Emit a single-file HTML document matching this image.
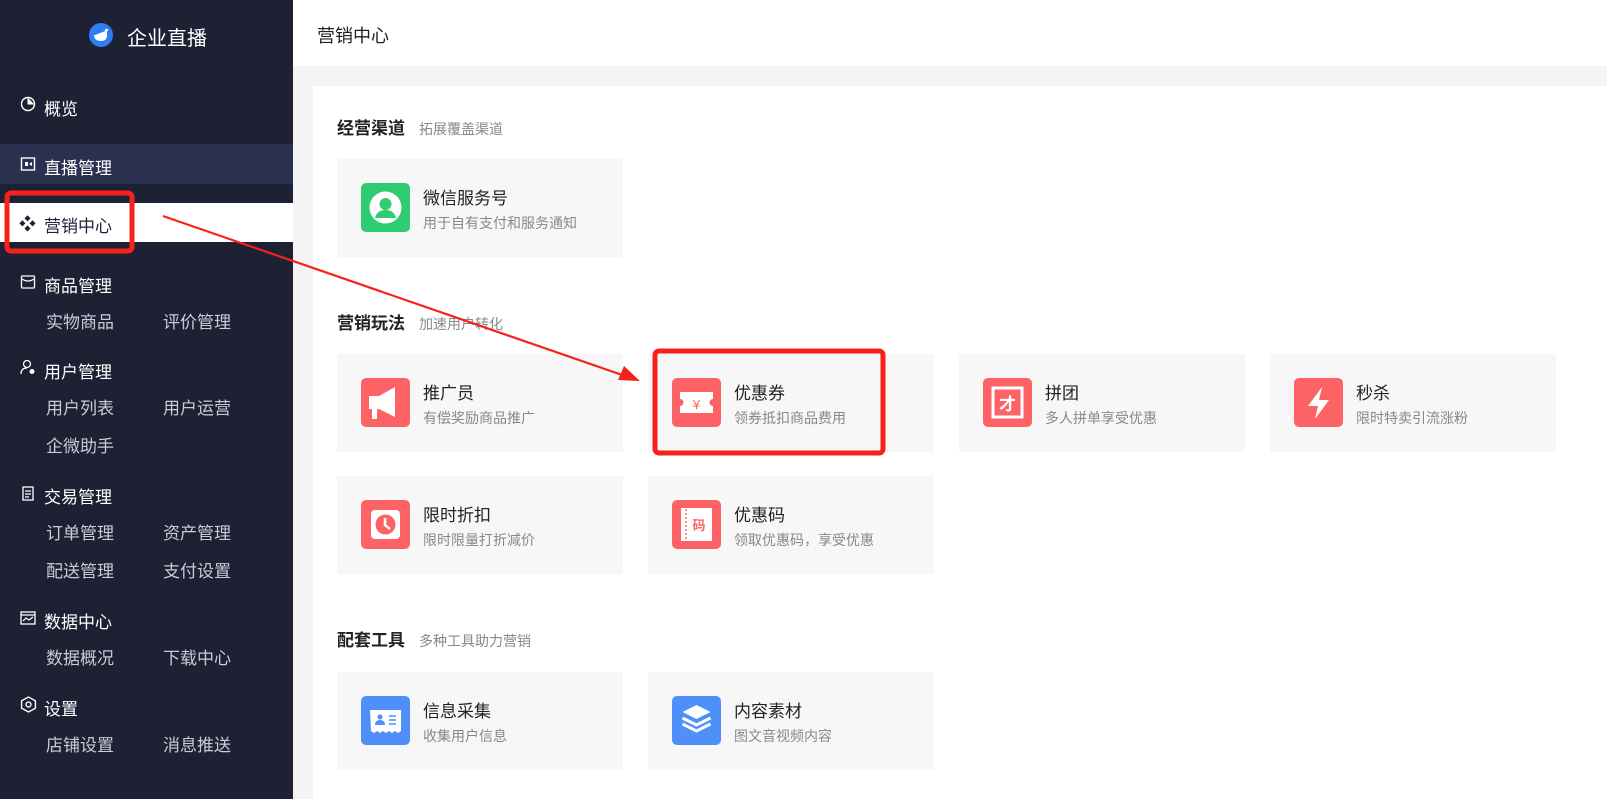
<!DOCTYPE html>
<html><head><meta charset="utf-8"><style>
*{margin:0;padding:0;box-sizing:border-box}
body{width:1607px;height:799px;overflow:hidden;font-family:"Liberation Sans","Noto Sans CJK SC",sans-serif;background:#f4f4f5;position:relative}
.a{position:absolute;white-space:nowrap}
#sb{position:absolute;left:0;top:0;width:293px;height:799px;background:#1e2134}
.m{position:absolute;left:44px;color:#fff;font-size:17px}
.s{position:absolute;color:#c9ccd4;font-size:17px}
.ic{position:absolute;left:20px;width:16px;height:16px}
.card{position:absolute;width:286px;height:98px;background:#f7f7f8}
.card .i{position:absolute;left:24px;top:24px;width:49px;height:49px;border-radius:5px;background:#fd6366}
.card .t{position:absolute;left:86px;top:25px;font-size:17px;color:#222}
.card .d{position:absolute;left:86px;top:54px;font-size:14px;color:#888}
.sec{position:absolute;left:337px;font-size:17px;font-weight:bold;color:#222}
.sec span{font-size:14px;font-weight:normal;color:#888;margin-left:14px}
</style></head><body>
<div id="sb">
 <svg class="a" style="left:89px;top:23px" width="24" height="24" viewBox="0 0 24 24"><circle cx="12" cy="12" r="12" fill="#2f7cf6"/><path d="M6 12q0 5 6 5t5-7V7h2" fill="#fff" stroke="#fff" stroke-width="2"/></svg>
 <div class="a" style="left:127px;top:22px;color:#fff;font-size:20px">企业直播</div>
 <svg class="ic" style="top:96px" viewBox="0 0 16 16"><circle cx="8" cy="8" r="6.5" fill="none" stroke="#fff" stroke-width="1.4"/><path d="M8 2v6h6" fill="#fff" stroke="#fff"/></svg>
 <div class="m" style="top:95px">概览</div>
 <div class="a" style="left:0;top:144px;width:293px;height:40px;background:#2a3150"></div>
 <svg class="ic" style="top:156px" viewBox="0 0 16 16"><rect x="1.5" y="2" width="13" height="12" fill="none" stroke="#fff" stroke-width="1.4"/><rect x="5" y="6" width="3" height="4" fill="#fff"/><path d="M9 8l3-2v4z" fill="#fff"/></svg>
 <div class="m" style="top:154px">直播管理</div>
 <div class="a" style="left:0;top:203px;width:293px;height:39px;background:#fff"></div>
 <div class="a" style="left:19px;top:210px;font-size:17px;color:#1e2134">❖</div>
 <div class="m" style="top:212px;color:#1e2134">营销中心</div>
 <svg class="ic" style="top:274px" viewBox="0 0 16 16"><rect x="1.5" y="2" width="13" height="12" rx="1" fill="none" stroke="#fff" stroke-width="1.3"/><path d="M2 5q6 4 12 0" fill="none" stroke="#fff" stroke-width="1.3"/></svg>
 <div class="m" style="top:272px">商品管理</div>
 <div class="s" style="left:46px;top:308px">实物商品</div><div class="s" style="left:163px;top:308px">评价管理</div>
 <svg class="ic" style="top:359px" viewBox="0 0 16 16"><circle cx="7" cy="5" r="3.5" fill="none" stroke="#fff" stroke-width="1.3"/><path d="M1 15q0-6 6-6" fill="none" stroke="#fff" stroke-width="1.3"/><circle cx="12" cy="12.5" r="2.5" fill="#fff"/></svg>
 <div class="m" style="top:358px">用户管理</div>
 <div class="s" style="left:46px;top:394px">用户列表</div><div class="s" style="left:163px;top:394px">用户运营</div>
 <div class="s" style="left:46px;top:432px">企微助手</div>
 <svg class="ic" style="top:485px" viewBox="0 0 16 16"><rect x="3" y="2" width="10" height="13" fill="none" stroke="#fff" stroke-width="1.3"/><path d="M5 6h6M5 9h6M5 12h4" stroke="#fff" stroke-width="1.2"/></svg>
 <div class="m" style="top:483px">交易管理</div>
 <div class="s" style="left:46px;top:519px">订单管理</div><div class="s" style="left:163px;top:519px">资产管理</div>
 <div class="s" style="left:46px;top:557px">配送管理</div><div class="s" style="left:163px;top:557px">支付设置</div>
 <svg class="ic" style="top:610px" viewBox="0 0 16 16"><rect x="1" y="2" width="14" height="12" fill="none" stroke="#fff" stroke-width="1.3"/><path d="M1 5h14M3 11l3-3 3 2 4-3" fill="none" stroke="#fff" stroke-width="1.2"/></svg>
 <div class="m" style="top:608px">数据中心</div>
 <div class="s" style="left:46px;top:644px">数据概况</div><div class="s" style="left:163px;top:644px">下载中心</div>
 <svg class="ic" style="top:696px;width:17px;height:17px" viewBox="0 0 16 16"><path d="M8 1l6.5 3.5v7L8 15l-6.5-3.5v-7z" fill="none" stroke="#fff" stroke-width="1.3"/><circle cx="8" cy="8" r="2.3" fill="none" stroke="#fff" stroke-width="1.3"/></svg>
 <div class="m" style="top:695px">设置</div>
 <div class="s" style="left:46px;top:731px">店铺设置</div><div class="s" style="left:163px;top:731px">消息推送</div>
</div>
<div class="a" style="left:293px;top:0;width:1314px;height:66px;background:#fff"></div>
<div class="a" style="left:317px;top:22px;font-size:18px;color:#222">营销中心</div>
<div class="a" style="left:313px;top:86px;width:1294px;height:713px;background:#fff"></div>

<div class="sec" style="top:114px">经营渠道<span>拓展覆盖渠道</span></div>
<div class="card" style="left:337px;top:159px"><div class="i" style="background:#2fcc71"><svg width="49" height="49" viewBox="0 0 49 49"><circle cx="24.5" cy="24.5" r="16" fill="#fff"/><circle cx="24.5" cy="21" r="6" fill="#2fcc71"/><path d="M14 35q2-8 10.5-8t10.5 8z" fill="#2fcc71"/></svg></div><div class="t">微信服务号</div><div class="d">用于自有支付和服务通知</div></div>

<div class="sec" style="top:309px">营销玩法<span>加速用户转化</span></div>
<div class="card" style="left:337px;top:354px"><div class="i"><svg width="49" height="49" viewBox="0 0 49 49"><path d="M8 18h10l16-9v30l-16-8h-2v10h-5v-10h-3z" fill="#fff"/></svg></div><div class="t">推广员</div><div class="d">有偿奖励商品推广</div></div>
<div class="card" style="left:648px;top:354px"><div class="i"><svg width="49" height="49" viewBox="0 0 49 49"><path d="M8 14h33v7a3 3 0 0 0 0 7v7H8v-7a3 3 0 0 0 0-7z" fill="#fff"/><text x="24.5" y="31" font-size="13" fill="#fd6366" text-anchor="middle" font-family="Liberation Sans">¥</text></svg></div><div class="t">优惠券</div><div class="d">领券抵扣商品费用</div></div>
<div class="card" style="left:959px;top:354px"><div class="i"><svg width="49" height="49" viewBox="0 0 49 49"><rect x="10" y="10" width="29" height="29" fill="none" stroke="#fff" stroke-width="3"/><text x="24.5" y="32" font-size="17" font-weight="bold" fill="#fff" text-anchor="middle" font-family="Noto Sans CJK SC">才</text></svg></div><div class="t">拼团</div><div class="d">多人拼单享受优惠</div></div>
<div class="card" style="left:1270px;top:354px"><div class="i"><svg width="49" height="49" viewBox="0 0 49 49"><path d="M28 9L14 28h10l-3 13 14-19H25z" fill="#fff"/></svg></div><div class="t">秒杀</div><div class="d">限时特卖引流涨粉</div></div>
<div class="card" style="left:337px;top:476px"><div class="i"><svg width="49" height="49" viewBox="0 0 49 49"><rect x="10" y="10" width="29" height="29" rx="4" fill="#fff"/><circle cx="24.5" cy="24.5" r="10" fill="#fd6366"/><path d="M24 18v7l5 4" stroke="#fff" stroke-width="2.5" fill="none"/></svg></div><div class="t">限时折扣</div><div class="d">限时限量打折减价</div></div>
<div class="card" style="left:648px;top:476px"><div class="i"><svg width="49" height="49" viewBox="0 0 49 49"><rect x="9" y="8" width="31" height="33" fill="#fff"/><path d="M14 9v31" stroke="#fd6366" stroke-width="1.5" stroke-dasharray="2 2"/><text x="27" y="30" font-size="13" font-weight="bold" fill="#fd6366" text-anchor="middle" font-family="Noto Sans CJK SC">码</text></svg></div><div class="t">优惠码</div><div class="d">领取优惠码，享受优惠</div></div>

<div class="sec" style="top:626px">配套工具<span>多种工具助力营销</span></div>
<div class="card" style="left:337px;top:672px"><div class="i" style="background:#4e8ff9"><svg width="49" height="49" viewBox="0 0 49 49"><path d="M9 14h31v21l-3 2-3-2-3 2-3-2-3 2-3-2-3 2-3-2-3 2-3-2z" fill="#fff"/><circle cx="19" cy="21" r="2.5" fill="#4e8ff9"/><path d="M14 29q0-5 5-5t5 5z" fill="#4e8ff9"/><path d="M28 20h7M28 24h7M28 28h7" stroke="#4e8ff9" stroke-width="1.6"/></svg></div><div class="t">信息采集</div><div class="d">收集用户信息</div></div>
<div class="card" style="left:648px;top:672px"><div class="i" style="background:#4e8ff9"><svg width="49" height="49" viewBox="0 0 49 49"><path d="M24.5 9l14 7-14 7-14-7z" fill="#fff"/><path d="M10.5 22l14 7 14-7M10.5 28l14 7 14-7" fill="none" stroke="#fff" stroke-width="3"/></svg></div><div class="t">内容素材</div><div class="d">图文音视频内容</div></div>

<svg class="a" style="left:0;top:0" width="1607" height="799">
 <rect x="7" y="193" width="125" height="58" rx="4" fill="none" stroke="#f5221b" stroke-width="5"/>
 <rect x="655" y="351" width="228" height="102" rx="4" fill="none" stroke="#f5221b" stroke-width="5"/>
 <line x1="163" y1="216" x2="628" y2="377" stroke="#f5221b" stroke-width="2.2"/>
 <path d="M640 381l-22 -1 6 -14z" fill="#f5221b"/>
</svg>
</body></html>
